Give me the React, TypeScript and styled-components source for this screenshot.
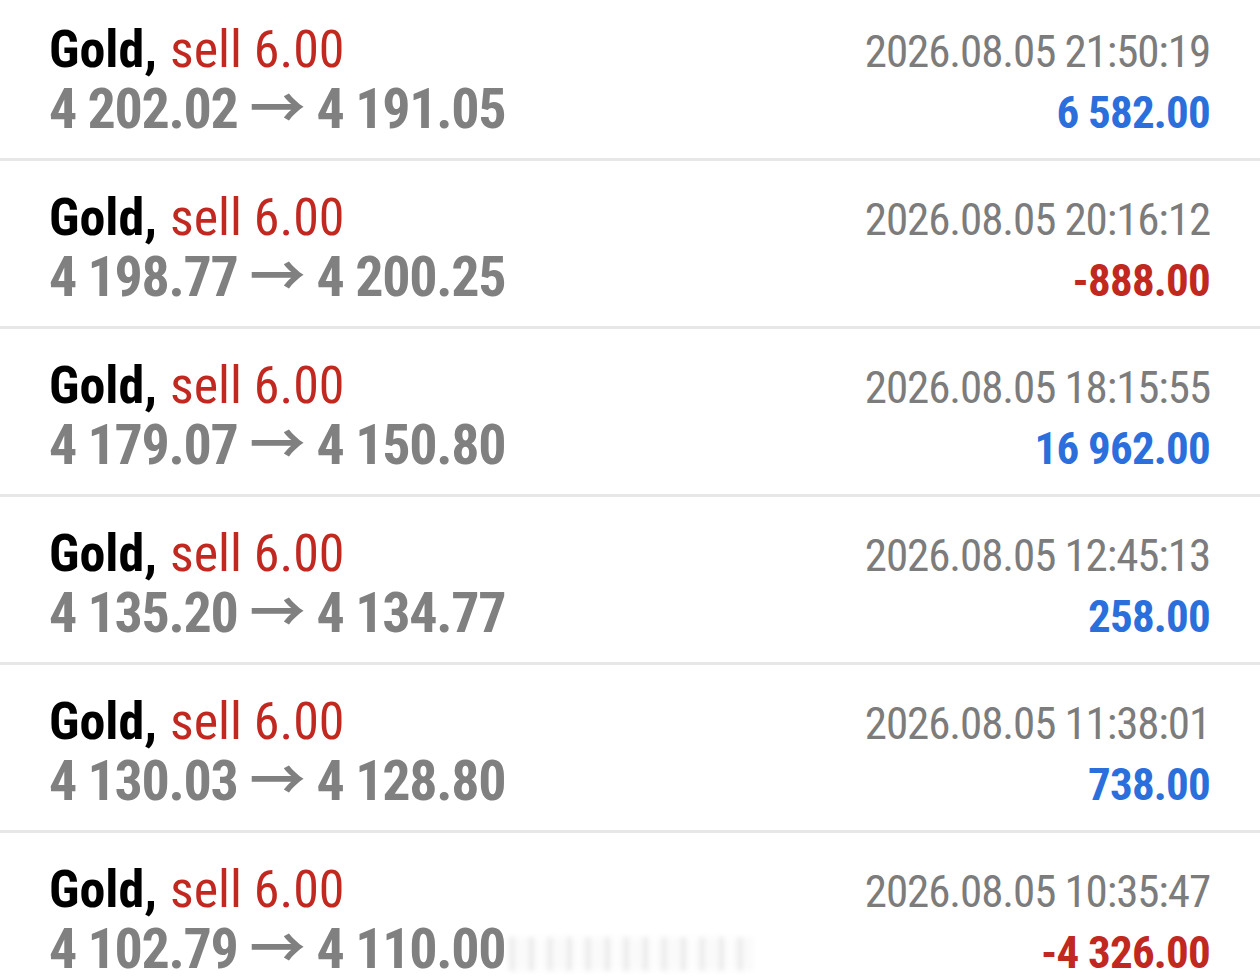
import React from "react";
import styled, { createGlobalStyle } from "styled-components";

const Global = createGlobalStyle`
  html, body { margin: 0; padding: 0; background: #fff; overflow: hidden; }
  body { font-family: "Roboto Condensed", Roboto, sans-serif; font-stretch: condensed; }
`;

const List = styled.div`
  display: flex;
  flex-direction: column;
  width: 1260px;
`;

const Row = styled.div`
  display: flex;
  flex-direction: column;
  padding: 21px 50px 0 49px;
  height: 137px;
  border-bottom: 3px solid #e7e7e7;
  margin-bottom: 7px;
`;

const Line = styled.div`
  display: flex;
  align-items: baseline;
  justify-content: space-between;
  height: 58px;
  line-height: 58px;
  white-space: nowrap;
`;

const Group = styled.div`
  display: flex;
  align-items: baseline;
`;

const Sym = styled.span`
  font-size: 52px;
  font-weight: 700;
  color: #000;
`;
const Side = styled.span`
  font-size: 52px;
  color: #c1281f;
  margin-left: 13px;
`;
const Price = styled.span`
  font-size: 56px;
  letter-spacing: -1.3px;
  font-weight: 700;
  color: #808080;
`;
const Arrow = styled.span`
  font-family: "Noto Sans CJK SC", sans-serif;
  font-stretch: normal;
  font-size: 56px;
  line-height: 50px;
  font-weight: 700;
  color: #808080;
  margin: 0 11px 0 12px;
`;
const Time = styled.span`
  font-size: 45px;
  letter-spacing: -1.1px;
  color: #7c7c7c;
`;
const Profit = styled.span<{ $neg?: boolean }>`
  font-size: 45px;
  letter-spacing: -0.8px;
  font-weight: 700;
  color: ${(p) => (p.$neg ? "#c1281f" : "#2b6fdc")};
`;

const Smudge = styled.span`
  display: inline-block;
  align-self: center;
  width: 245px;
  height: 34px;
  margin-left: 4px;
  margin-top: 10px;
  filter: blur(2.5px);
  opacity: 0.45;
  background: repeating-linear-gradient(
    90deg,
    #d8d8d8 0 6px,
    #f6f6f6 6px 20px,
    #d2d2d2 20px 25px,
    #fbfbfb 25px 38px
  );
`;

const trades = [
  ["4 202.02", "4 191.05", "2026.08.05 21:50:19", "6 582.00"],
  ["4 198.77", "4 200.25", "2026.08.05 20:16:12", "-888.00"],
  ["4 179.07", "4 150.80", "2026.08.05 18:15:55", "16 962.00"],
  ["4 135.20", "4 134.77", "2026.08.05 12:45:13", "258.00"],
  ["4 130.03", "4 128.80", "2026.08.05 11:38:01", "738.00"],
  ["4 102.79", "4 110.00", "2026.08.05 10:35:47", "-4 326.00"],
];

export default function App() {
  return (
    <>
      <Global />
      <List>
        {trades.map((t, i) => (
          <Row key={i}>
            <Line>
              <Group>
                <Sym>Gold,</Sym>
                <Side>sell 6.00</Side>
              </Group>
              <Time>{t[2]}</Time>
            </Line>
            <Line>
              <Group>
                <Price>{t[0]}</Price>
                <Arrow>→</Arrow>
                <Price>{t[1]}</Price>
                {i === trades.length - 1 && <Smudge />}
              </Group>
              <Profit $neg={t[3].startsWith("-")}>{t[3]}</Profit>
            </Line>
          </Row>
        ))}
      </List>
    </>
  );
}
